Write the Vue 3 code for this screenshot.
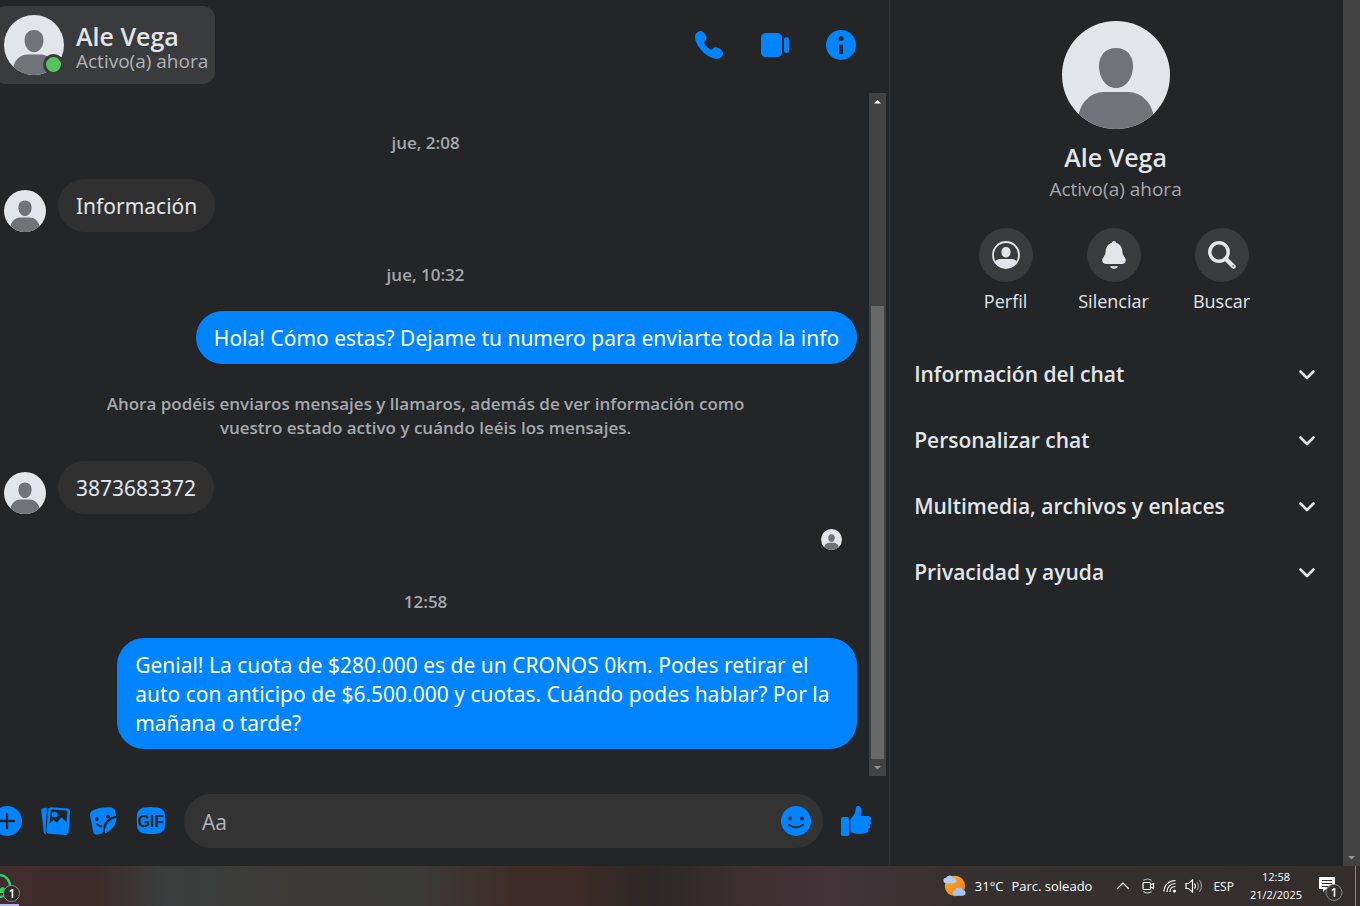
<script setup>
import { ref } from "vue";

const contact = { name: "Ale Vega", status: "Activo(a) ahora" };
const draft = ref("");

const feed = [
  { type: "time", text: "jue, 2:08" },
  { type: "in", text: "Información" },
  { type: "time", text: "jue, 10:32" },
  { type: "out", text: "Hola! Cómo estas? Dejame tu numero para enviarte toda la info" },
  {
    type: "note",
    text: "Ahora podéis enviaros mensajes y llamaros, además de ver información como vuestro estado activo y cuándo leéis los mensajes."
  },
  { type: "in", text: "3873683372" },
  { type: "seen" },
  { type: "time", text: "12:58" },
  {
    type: "out",
    text: "Genial! La cuota de $280.000 es de un CRONOS 0km. Podes retirar el auto con anticipo de $6.500.000 y cuotas. Cuándo podes hablar? Por la mañana o tarde?"
  }
];

const actions = [
  { label: "Perfil", icon: "profile" },
  { label: "Silenciar", icon: "bell" },
  { label: "Buscar", icon: "search" }
];

const sections = [
  "Información del chat",
  "Personalizar chat",
  "Multimedia, archivos y enlaces",
  "Privacidad y ayuda"
];

const open = ref(null);

function toggle(section) {
  open.value = open.value === section ? null : section;
}
</script>

<template>
  <div class="screen">
    <svg class="defs" aria-hidden="true">
      <symbol id="avatar" viewBox="0 0 108 108">
        <clipPath id="avatar-clip"><circle cx="54" cy="54" r="54" /></clipPath>
        <g clip-path="url(#avatar-clip)">
          <rect width="108" height="108" fill="#e2e5ea" />
          <path d="M54 27c11 0 17 8 17 18 0 12-7 22-17 22s-17-10-17-22c0-10 6-18 17-18z" fill="#707378" />
          <path d="M16 108V98c1-15 12-27 26-27h24c14 0 25 12 26 27v10z" fill="#707378" />
        </g>
      </symbol>
    </svg>

    <div class="window">
      <main class="chat">
        <header class="chat-header">
          <button class="contact">
            <span class="contact-photo">
              <svg width="60" height="60"><use href="#avatar" /></svg>
              <span class="online"></span>
            </span>
            <span class="contact-text">
              <span class="contact-name">{{ contact.name }}</span>
              <span class="contact-status">{{ contact.status }}</span>
            </span>
          </button>

          <div class="calls">
            <button class="icon" aria-label="Llamar">
              <svg viewBox="0 0 30 30">
                <path d="M1 6.500C1 3.500 4 1 6.500 1c1.500 0 2.700.7 3.800 2.300 1.200 1.700 2.300 3.300 2.300 4.900 0 1.500-.8 2.300-1.800 3.200-.8.7-.9 1.300-.4 2.100 1.400 2.500 3.600 4.700 6 6 .8.500 1.400.3 2.100-.4.900-1 1.800-1.800 3.300-1.800 1.500 0 3.200 1 4.900 2.200 1.600 1.100 2.300 2.300 2.300 3.800 0 2.800-2.700 5.500-6 5.500C13.500 28.800 1 16.300 1 6.500z" />
              </svg>
            </button>
            <button class="icon" aria-label="Videollamada">
              <svg viewBox="0 0 30 30">
                <rect x="1" y="3" width="21" height="24" rx="4.500" />
                <rect x="24" y="7" width="5" height="16" rx="2.500" />
              </svg>
            </button>
            <button class="icon" aria-label="Información">
              <svg viewBox="0 0 30 30">
                <circle cx="15" cy="15" r="15" />
                <g fill="#242527">
                  <circle cx="15" cy="8.500" r="2.500" />
                  <path d="M13.200 14.500h3.800v8.800a1 1 0 0 1-1 1h-1.800a1 1 0 0 1-1-1z" />
                </g>
              </svg>
            </button>
          </div>
        </header>

        <section class="feed">
          <div class="messages">
            <template v-for="(item, i) in feed" :key="i">
              <p v-if="item.type === 'time'" class="time">{{ item.text }}</p>
              <p v-else-if="item.type === 'note'" class="note"><span>{{ item.text }}</span></p>
              <div v-else-if="item.type === 'seen'" class="seen">
                <svg width="21" height="21"><use href="#avatar" /></svg>
              </div>
              <div v-else class="row" :class="item.type">
                <svg v-if="item.type === 'in'" width="42" height="42"><use href="#avatar" /></svg>
                <p class="bubble">{{ item.text }}</p>
              </div>
            </template>
          </div>
          <div class="scrollbar" aria-hidden="true">
            <svg class="arrow up" viewBox="0 0 17 17"><path d="M5 10.500h7L8.500 7z" /></svg>
            <span class="before"></span>
            <span class="thumb"></span>
            <svg class="arrow" viewBox="0 0 17 17"><path d="M5 7h7l-3.500 3.500z" /></svg>
          </div>
        </section>

        <form class="composer" @submit.prevent="draft = ''">
          <button type="button" class="icon" aria-label="Más acciones">
            <svg viewBox="0 0 30 30">
              <circle cx="15" cy="15" r="15" />
              <path d="M15 8v14M8 15h14" stroke="#242527" stroke-width="2.400" stroke-linecap="round" />
            </svg>
          </button>
          <button type="button" class="icon" aria-label="Adjuntar foto">
            <svg viewBox="0 0 30 30">
              <path d="M2.500 2.200l3.400-.5c.7 0 1.100.5 1 1.200L5.500 26c0 .9.500 1.800 1.200 2.500-1.400.3-2.700-.7-2.900-2.200L1.200 4.700c-.2-1.300.3-2.300 1.300-2.500z" />
              <path d="M11.500 1.200l15.800 1.200c1.800.1 2.900 1.300 2.800 3L28.600 26c-.1 1.800-1.300 3-3.100 2.900L9 27.800c-1.700-.1-2.800-1.300-2.700-3L8.300 4c.1-1.800 1.400-2.900 3.200-2.800z" />
              <path d="M9.600 17.400L10.600 5c.1-1.100.7-1.600 1.800-1.500l13.500 1c1.100.1 1.600.7 1.500 1.800l-.8 10-4.200-4.100c-.6-.6-1.300-.6-1.900 0l-3.600 4.200-2.500-2c-.6-.5-1.200-.5-1.800 0z" fill="#242527" />
              <circle cx="14.700" cy="8.600" r="2.900" />
            </svg>
          </button>
          <button type="button" class="icon" aria-label="Elegir sticker">
            <svg viewBox="0 0 30 30">
              <path d="M7 3.500C11 1.800 17 .9 22 1.200c2.500.2 4.300 1.300 4.900 3.300l1.300 5.300c-6.200.9-10.800 4.600-12.300 9.200-.8 2.600-.3 5.700-1.600 8.200l-4.700 1.300c-2 .5-3.500-.3-4.200-2.300L2.200 10.500C1.200 6.800 3.600 4.700 7 3.500z" />
              <path d="M28.500 11.800c.5 5-4 11.900-10.200 15-1 .5-1.700-.1-1.500-1.300.4-2.200.4-4 1.500-6.200 1.600-3.500 5-6.200 10.200-7.500z" />
              <g fill="#242527">
                <circle cx="8.800" cy="13" r="1.900" />
                <circle cx="20" cy="10.500" r="1.900" />
              </g>
              <path d="M9 18c1.200 1.700 2.700 2.400 4.500 2.200" fill="none" stroke="#242527" stroke-width="1.800" stroke-linecap="round" />
            </svg>
          </button>
          <button type="button" class="icon" aria-label="Elegir GIF">
            <svg viewBox="0 0 30 30">
              <path d="M8.500 1.500c4-.7 9-.7 13 0 4.300.6 7 3 7.400 7 .4 4 .4 8 0 12-.4 4-3.100 6.400-7.400 7-4 .7-9 .7-13 0-4.300-.6-7-3-7.400-7-.4-4-.4-8 0-12 .4-4 3.100-6.400 7.400-7z" />
              <text x="15" y="21" text-anchor="middle" class="gif">GIF</text>
            </svg>
          </button>

          <div class="field">
            <input v-model="draft" type="text" placeholder="Aa" aria-label="Mensaje" />
            <button type="button" class="icon" aria-label="Elegir emoji">
              <svg viewBox="0 0 30 30">
                <circle cx="15" cy="15" r="15" />
                <g fill="#303030">
                  <circle cx="9" cy="12.500" r="2" />
                  <circle cx="21" cy="12.500" r="2" />
                </g>
                <path d="M8 18.800c4 3.300 10 3.300 14 0" fill="none" stroke="#303030" stroke-width="2" stroke-linecap="round" />
              </svg>
            </button>
          </div>

          <button type="submit" class="icon" aria-label="Enviar Me gusta">
            <svg viewBox="0 0 30 30">
              <rect y="11" width="8" height="19" rx="1.500" />
              <path d="M9.500 14c0-1 .3-1.600 1-2.200 2.200-2 3.500-4.200 4-7.300L14.800 2c.3-1.400 1-2 2.200-2 2.200 0 3.500 2 3.500 4.500 0 2-.3 3.500-.6 5.500h7.600c1.600 0 2.600 1 2.600 2.400 0 1-.4 1.700-1 2.200.6.500.9 1.200.9 2 0 1.200-.6 2-1.600 2.400.4.500.6 1 .6 1.600 0 1.200-.7 2-1.800 2.300.2.400.3.800.3 1.200 0 1.700-1.100 2.900-3 2.900-1.500.6-3.500.8-6 .8-3 0-5.400-.3-7.500-1.200-1-.5-1.500-1.200-1.500-2.400z" />
            </svg>
          </button>
        </form>
      </main>

      <aside class="details">
        <svg class="portrait" width="108" height="108"><use href="#avatar" /></svg>
        <h1>{{ contact.name }}</h1>
        <p class="presence">{{ contact.status }}</p>

        <div class="actions">
          <button v-for="action in actions" :key="action.label">
            <span class="disc">
              <svg v-if="action.icon === 'profile'" viewBox="0 0 28 28">
                <clipPath id="profile-clip"><circle cx="14" cy="14" r="13" /></clipPath>
                <circle cx="14" cy="14" r="13" fill="none" stroke="#e2e5ea" stroke-width="1.800" />
                <path d="M14 6c3 0 4.600 2.100 4.600 5s-2 5.600-4.600 5.600S9.400 14 9.400 11 11 6 14 6zM3 28v-7c1-2 3-3 5-3h12c2 0 4 1 5 3v7z" clip-path="url(#profile-clip)" />
              </svg>
              <svg v-else-if="action.icon === 'bell'" viewBox="0 0 28 28">
                <path d="M14 0c1.200 0 2 .8 2.100 1.800 3.600 1 5.900 4.300 6.300 8.600.3 2.600.8 3.900 2 5.500.8 1.100 1.400 2 1.400 3.300 0 2.400-1.600 3.800-4 3.800H6.200c-2.400 0-4-1.400-4-3.800 0-1.300.6-2.200 1.400-3.300 1.200-1.600 1.700-2.900 2-5.500.4-4.300 2.700-7.600 6.300-8.600C12 .8 12.800 0 14 0zM10 25.200h8c-.3 1.500-2 2.500-4 2.500s-3.700-1-4-2.500z" />
              </svg>
              <svg v-else viewBox="0 0 28 28">
                <circle cx="11" cy="11" r="9.200" fill="none" stroke="#e2e5ea" stroke-width="3.500" />
                <path d="M18 18l7.500 7.500" stroke="#e2e5ea" stroke-width="4.500" stroke-linecap="round" />
                <circle cx="25" cy="25" r=".8" fill="#3a3b3c" />
              </svg>
            </span>
            {{ action.label }}
          </button>
        </div>

        <button
          v-for="section in sections"
          :key="section"
          class="section"
          :aria-expanded="open === section"
          @click="toggle(section)"
        >
          {{ section }}
          <svg width="18" height="18" viewBox="0 0 18 18">
            <path d="M2.500 6.500L9 13l6.500-6.500" fill="none" stroke="#e2e5ea" stroke-width="2.600" stroke-linecap="round" stroke-linejoin="round" />
          </svg>
        </button>
      </aside>

      <div class="scrollbar page" aria-hidden="true">
        <svg class="arrow" viewBox="0 0 17 17"><path d="M5 7h7l-3.500 3.500z" /></svg>
      </div>
    </div>

    <footer class="taskbar">
      <button class="app" aria-label="WhatsApp">
        <svg width="22" height="40" viewBox="0 0 22 40">
          <circle cx="-1" cy="20" r="11" fill="none" stroke="#25d366" stroke-width="2.400" />
          <path d="M0 23c1-2 3-2 5-1l-2 5H0z" fill="#25d366" />
          <rect y="38" width="19" height="2" fill="#b9b4f0" />
          <circle cx="11.500" cy="27.500" r="8" fill="#2f2c2c" stroke="#8b8b8b" />
          <text x="12" y="32" text-anchor="middle" class="count">1</text>
        </svg>
      </button>

      <div class="tray">
        <button class="weather">
          <svg width="24" height="24" viewBox="0 0 26 24">
            <defs>
              <linearGradient id="sun" x1="0" y1="0" x2="1" y2="1">
                <stop offset="0" stop-color="#fbb62c" />
                <stop offset="1" stop-color="#ee7412" />
              </linearGradient>
            </defs>
            <circle cx="13" cy="12" r="11" fill="url(#sun)" />
            <path d="M3.500 9a3 3 0 0 1 0-6C4 1.500 5.500.5 7.300.5c2 0 3.200 1 3.700 2.700 2.200 0 3.500 1.100 3.500 2.800S13.200 9 11.300 9z" fill="#b4cdf5" />
            <path d="M13.500 22.500a3 3 0 0 1 0-6c.5-2 1.800-2.800 3.800-2.800s3.300.8 3.700 2.500c2.200 0 3.500 1.300 3.500 3.200 0 1.800-1.300 3.100-3.200 3.100z" fill="#a6c4f4" />
          </svg>
          <span>31°C</span>
          <span>Parc. soleado</span>
        </button>

        <div class="status-icons">
          <svg class="more" width="14" height="16" viewBox="0 0 14 16"><path d="M1 11l6-6 6 6" /></svg>
          <svg width="14" height="16" viewBox="0 0 14 16">
            <path d="M2.500 2.500Q6.500-.5 10.500 2.500M2.500 13.500q4 3 8 0" opacity=".7" />
            <rect x="2" y="4.500" width="7.500" height="7" rx="1" />
            <path d="M9.500 7l3-1.500v5L9.500 9" />
          </svg>
          <svg width="14" height="16" viewBox="0 0 14 16">
            <path d="M1 13.500C1 7 6 2.500 12.500 2.500M4 14c0-5 3.500-8.500 8.500-8.500M7 14c0-3.300 2.200-5.500 5.500-5.500" />
            <circle cx="11.500" cy="13" r="1.500" class="solid" />
          </svg>
          <svg width="18" height="16" viewBox="0 0 18 16">
            <path d="M1 5.500h2.500L7.500 2v12l-4-3.500H1zM9.500 5.500q2 2.500 0 5" />
            <path d="M12 4q3 4 0 8M14.300 2q4.500 6 0 12" opacity=".5" />
          </svg>
        </div>

        <span class="lang">ESP</span>
        <time class="clock" datetime="2025-02-21T12:58">
          <span>12:58</span>
          <span>21/2/2025</span>
        </time>
        <button class="alerts" aria-label="Notificaciones">
          <svg width="26" height="32" viewBox="0 0 26 32">
            <path d="M1 7h16v12H8l-3 3v-3H1z" fill="#fff" />
            <path d="M4 10.500h10M4 13.500h10M4 16.500h6" stroke="#353030" />
            <circle cx="16" cy="22.500" r="8" fill="#353131" stroke="#8b8b8b" />
            <text x="16" y="27" text-anchor="middle" class="count">1</text>
          </svg>
        </button>
      </div>
    </footer>
  </div>
</template>

<style>
body {
  margin: 0;
  background: #242527;
}
</style>

<style scoped>
.screen {
  display: flex;
  flex-direction: column;
  height: 100vh;
  overflow: hidden;
  background: #242527;
  color: #e2e5ea;
  font-family: "Open Sans", "Noto Sans", sans-serif;
  font-size: 21px;
}

.defs {
  position: absolute;
  width: 0;
  height: 0;
}

svg {
  display: block;
  flex: none;
}

p,
h1 {
  margin: 0;
}

button {
  padding: 0;
  border: none;
  background: none;
  color: inherit;
  font: inherit;
  cursor: pointer;
}

.window {
  display: flex;
  flex: 1;
  min-height: 0;
}

.chat {
  display: flex;
  flex: 1;
  flex-direction: column;
  min-width: 0;
  border-right: 1px solid #303133;
}

.chat-header {
  display: flex;
  align-items: center;
  justify-content: space-between;
  height: 90px;
  padding-right: 33px;
  margin-bottom: 3px;
}

.contact {
  display: flex;
  align-items: center;
  gap: 12px;
  height: 78px;
  margin-left: -6px;
  padding: 0 7px 0 10px;
  border-radius: 12px;
  background: #3a3b3c;
  text-align: left;
}

.contact-photo {
  position: relative;
}

.online {
  position: absolute;
  right: 0;
  bottom: 0;
  width: 15px;
  height: 15px;
  border: 3px solid #3a3b3c;
  border-radius: 50%;
  background: #55c25a;
}

.contact-text {
  display: flex;
  flex-direction: column;
  padding-top: 6px;
}

.contact-name {
  font-size: 25px;
  font-weight: 600;
  line-height: 26px;
}

.contact-status {
  color: #b0b3b8;
  font-size: 19px;
  line-height: 24px;
}

.calls {
  display: flex;
  gap: 36px;
}

.icon {
  flex: none;
  width: 30px;
  height: 30px;
}

.icon svg {
  width: 30px;
  height: 30px;
  overflow: visible;
  fill: #0084ff;
}

.feed {
  display: flex;
  flex: 1;
  min-height: 0;
  padding-right: 3px;
}

.messages {
  flex: 1;
  min-width: 0;
  padding: 7px 12px 0 0;
  overflow: hidden;
}

.time,
.note {
  padding-right: 6px;
  color: #a5a8ad;
  font-size: 17px;
  font-weight: 600;
  line-height: 24px;
  text-align: center;
}

.time {
  margin: 31px 0 24px;
}

.note {
  margin: 28px 0 21px;
}

.note span {
  display: inline-block;
  max-width: 660px;
}

.row {
  display: flex;
  align-items: flex-end;
  gap: 12px;
}

.row.in {
  padding-left: 4px;
}

.row.out {
  justify-content: flex-end;
}

.bubble {
  max-width: 704px;
  padding: 13px 18px 11px;
  border-radius: 27px;
  background: #303030;
  font-family: "Noto Sans", "Open Sans", sans-serif;
  line-height: 29px;
}

.out .bubble {
  background: #0084ff;
  color: #fff;
}

.seen {
  display: flex;
  justify-content: flex-end;
  padding: 15px 15px 9px 0;
}

.scrollbar {
  display: flex;
  flex: none;
  flex-direction: column;
  width: 17px;
  background: #424242;
}

.arrow {
  width: 17px;
  height: 17px;
  fill: #969696;
}

.arrow.up {
  fill: #fff;
}

.before {
  flex: 196;
}

.thumb {
  flex: 453;
  margin: 0 2px;
  background: #686868;
}

.page {
  justify-content: flex-end;
}

.composer {
  display: flex;
  align-items: center;
  gap: 18px;
  height: 90px;
  margin-left: -8px;
  padding-right: 18px;
}

.gif {
  fill: #242527;
  font-family: "Liberation Sans", Arial, sans-serif;
  font-size: 16px;
  font-weight: 700;
}

.field {
  display: flex;
  flex: 1;
  align-items: center;
  min-width: 0;
  height: 54px;
  padding: 0 12px 0 18px;
  box-sizing: border-box;
  border-radius: 27px;
  background: #333334;
}

.field input {
  flex: 1;
  min-width: 0;
  padding: 2px 0 0;
  border: none;
  outline: none;
  background: none;
  color: #e2e5ea;
  font: inherit;
}

.field input::placeholder {
  color: #b0b3b8;
  opacity: 1;
}

.details {
  display: flex;
  flex: none;
  flex-direction: column;
  width: 33.3%;
  padding: 21px 26px 0 24px;
  box-sizing: border-box;
}

.portrait {
  align-self: center;
}

h1 {
  margin-top: 12px;
  font-size: 25px;
  font-weight: 600;
  line-height: 32px;
  text-align: center;
}

.presence {
  color: #a5a8ad;
  font-size: 19px;
  line-height: 32px;
  text-align: center;
}

.actions {
  display: flex;
  justify-content: center;
  margin: 23px 4px 27px 0;
}

.actions button {
  display: flex;
  flex-direction: column;
  align-items: center;
  gap: 6px;
  width: 108px;
  font-size: 18px;
  line-height: 26px;
}

.disc {
  display: grid;
  place-items: center;
  width: 54px;
  height: 54px;
  border-radius: 50%;
  background: #3a3b3c;
}

.disc svg {
  width: 28px;
  height: 28px;
  fill: #e2e5ea;
}

.section {
  display: flex;
  align-items: center;
  justify-content: space-between;
  height: 66px;
  padding-right: 1px;
  font-weight: 600;
  text-align: left;
}

.taskbar {
  display: flex;
  flex: none;
  align-items: center;
  justify-content: space-between;
  height: 40px;
  background: linear-gradient(90deg, #432c2e 0%, #3d2b2b 7%, #3a3d3d 12%, #3c3a37 22%, #3a3a38 31%, #3f2b28 38%, #3e2b27 42%, #2d2827 48%, #3d3033 56%, #41353a 61%, #373030 70%, #332e2c 100%);
  color: #fff;
  font-size: 13px;
}

.count {
  fill: #fff;
  font-size: 12px;
  font-weight: 600;
}

.tray {
  display: flex;
  align-items: center;
  height: 40px;
}

.weather {
  display: flex;
  align-items: center;
  gap: 8px;
  margin-right: 24px;
}

.status-icons {
  display: flex;
  gap: 8px;
}

.status-icons svg {
  fill: none;
  stroke: #fff;
  stroke-width: 1.2;
}

.status-icons .more {
  margin-right: 3px;
}

.status-icons .solid {
  fill: #fff;
  stroke: none;
}

.lang {
  margin: 0 16px 0 10px;
  font-size: 12px;
}

.clock {
  display: flex;
  flex-direction: column;
  font-size: 11px;
  line-height: 18px;
  text-align: center;
}

.alerts {
  height: 40px;
  margin: 0 4px 0 16px;
  padding-right: 11px;
  border-right: 1px solid #8a8785;
}
</style>
